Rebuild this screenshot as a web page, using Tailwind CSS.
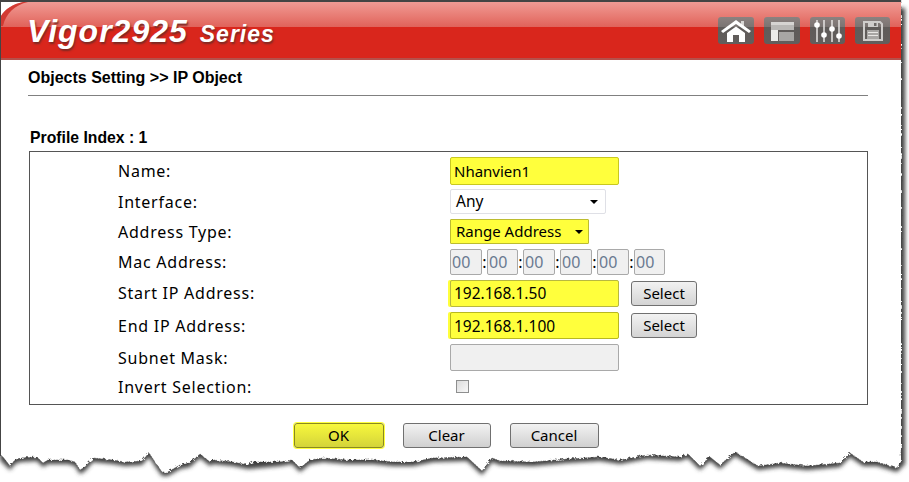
<!DOCTYPE html>
<html lang="en">
<head>
  <meta charset="UTF-8" />
  <title>IP Object</title>
  <script src="https://cdn.jsdelivr.net/npm/@tailwindcss/browser@4"></script>
</head>
<body class="bg-white">
  <div class="relative w-[909px] h-[482px] overflow-hidden bg-white font-['Noto_Sans',sans-serif] text-[16px] text-black">
    <!-- torn paper edge and drop shadow -->
    <svg class="absolute inset-0" width="909" height="482" viewBox="0 0 909 482">
      <defs>
        <filter id="blur" x="-5%" y="-5%" width="110%" height="110%"><feGaussianBlur stdDeviation="2" /></filter>
        <filter id="rough" x="-2%" y="-2%" width="104%" height="104%"><feTurbulence type="fractalNoise" baseFrequency="0.35" numOctaves="2" seed="4" /><feDisplacementMap in="SourceGraphic" scale="4" /></filter>
      </defs>
      <path filter="url(#blur)" fill="#404040" d="M6 8H905V464L897 472L877 466L863 466L850 457L840 467L807 470L780 467L758 470L745 462L735 456L720 469L710 461L700 470L688 458L680 461L647 459L620 464L600 461L567 463L533 466L500 465L492 462L482 475L467 461L433 462L413 466L393 466L373 464L347 464L323 462L310 464L300 472L292 464L280 466L248 469L233 466L213 464L210 466L200 458L190 467L180 469L168 476L162 476L157 469L149 457L142 465L125 466L113 464L93 462L85 471L80 474L75 466L68 464L48 464L43 467L37 461L20 462L15 464L10 470L0 460Z" />
      <path filter="url(#rough)" fill="#fff" stroke="#444" stroke-width="0.6" stroke-dasharray="1.500 1" d="M0 0H901V462L897 468L877 462L863 462L850 453L840 463L807 466L780 463L758 466L745 458L735 452L720 465L710 457L700 466L688 454L680 457L647 455L620 460L600 457L567 459L533 462L500 461L492 458L482 471L467 457L433 458L413 462L393 462L373 460L347 460L323 458L310 460L300 468L292 460L280 462L253 462L248 465L233 462L213 460L210 462L200 454L190 463L180 465L168 472L162 472L157 465L149 453L142 461L125 462L113 460L93 458L85 467L80 470L75 462L68 460L48 460L43 463L37 457L20 458L15 460L10 466L3 457L0 455Z" />
      <rect x="0" y="0" width="901" height="450" fill="#fff" />
    </svg>

    <div class="absolute top-0 left-0 w-[1px] h-[456px] bg-[#444]"></div>

    <div class="relative w-[901px] pl-[1px]">
      <header class="relative h-[60px] border-t-2 border-[#444] bg-[#d9261c] overflow-hidden flex items-center justify-between">
        <div class="absolute inset-x-0 top-0 h-[25px] bg-gradient-to-b from-[#f09a94] to-[#e0625a]"></div>
        <div class="absolute inset-x-0 bottom-0 h-[2px] bg-[#b5504a]"></div>
        <svg class="absolute top-0 left-0" width="30" height="24" viewBox="0 0 30 24"><path d="M0 0H22C12 2 4 7 0 14Z" fill="#fff" /><path d="M0 14C4 7 12 2 22 0H27C14 3 5 11 2 24H0Z" fill="#d23a32" /></svg>
        <div class="relative ml-[26px] flex items-baseline italic font-bold text-white font-['Liberation_Sans',sans-serif] [text-shadow:1px_2px_2px_#7a2a24]">
          <span class="text-[32px] tracking-[1px]">Vigor2925</span>
          <span class="ml-[12px] text-[23px] tracking-[1px]">Series</span>
        </div>
        <div class="relative mr-[11px] mt-[-1px] flex gap-[10px]">
          <div class="h-[27px] w-[36px] rounded-[3px] bg-[linear-gradient(#8b8280_0,#7b7472_36%,#5f5b59_36%,#625e5c_100%)]">
            <svg width="36" height="27" viewBox="0 0 36 27"><path d="M23 4H26V10L23 8Z" fill="#d8d6d4" /><path d="M3 14L18 3L33 14L31 16L18 7L5 16Z" fill="#fff" /><path d="M9 16L18 9.500L27 16V25H21V18H15V25H9Z" fill="#fff" /></svg>
          </div>
          <div class="h-[27px] w-[36px] rounded-[3px] bg-[linear-gradient(#8b8280_0,#7b7472_36%,#5f5b59_36%,#625e5c_100%)]">
            <svg width="36" height="27" viewBox="0 0 36 27"><path d="M7 5H30V13H7Z" fill="#b9b7b5" /><path d="M7 5H30V8H7Z" fill="#d6d4d2" /><path d="M7 13H14V24H7Z" fill="#ecebe9" /><path d="M15 15H30V24H15Z" fill="#a8a6a4" /></svg>
          </div>
          <div class="h-[27px] w-[35px] rounded-[3px] bg-[linear-gradient(#8b8280_0,#7b7472_36%,#5f5b59_36%,#625e5c_100%)]">
            <svg width="35" height="27" viewBox="0 0 35 27"><path d="M7 3V25M14 3V25M22 3V25M29 3V25" stroke="#e6e4e2" stroke-width="1.500" /><g fill="#fff"><circle cx="7" cy="8" r="2.800" /><circle cx="14" cy="18" r="2.800" /><circle cx="22" cy="12" r="2.800" /><circle cx="29" cy="19" r="2.800" /></g></svg>
          </div>
          <div class="h-[27px] w-[35px] rounded-[3px] bg-[linear-gradient(#8b8280_0,#7b7472_36%,#5f5b59_36%,#625e5c_100%)]">
            <svg width="35" height="27" viewBox="0 0 35 27"><path d="M9 5H25L27 7V23H9Z" fill="none" stroke="#cfcdcb" stroke-width="2" /><path d="M13 5H23V10H13Z" fill="#cfcdcb" /><path d="M19 6H21.500V9H19Z" fill="#6e6a68" /><path d="M12 13H24V22H12Z" fill="#a8a6a4" /><path d="M13 15H23V16H13ZM13 18H23V19H13Z" fill="#e8e6e4" /></svg>
          </div>
        </div>
      </header>

      <div class="pl-[27px] pr-[33px]">
        <h1 class="h-[36px] border-b border-[#808080] pt-[8px] font-['Liberation_Sans',sans-serif] text-[16px] font-bold leading-[20px]">Objects Setting &gt;&gt; IP Object</h1>
        <h2 class="mt-[32px] ml-[2px] h-[23px] font-['Liberation_Sans',sans-serif] text-[15.750px] font-bold leading-[20px]">Profile Index : 1</h2>

        <div class="ml-[1px] h-[254px] border-[1.500px] border-[#555] pl-[88px] pt-[3px]">
          <div class="flex h-[31.500px] items-center"><span class="w-[332px] tracking-[0.75px]">Name:</span><input value="Nhanvien1" class="h-[28px] w-[169px] rounded-[2px] border border-[#c8c820] bg-[#ffff3c] px-[3px] text-[15px] outline-none" /></div>
          <div class="flex h-[30px] items-center"><span class="w-[332px] tracking-[0.75px]">Interface:</span><div class="flex h-[25px] w-[156px] items-center justify-between rounded-[2px] border border-[#dfe0e6] bg-white pl-[5px] pr-[7px] text-[15.500px]"><span>Any</span><span class="h-0 w-0 border-x-[4px] border-t-[4px] border-x-transparent border-t-black"></span></div></div>
          <div class="flex h-[30px] items-center"><span class="w-[332px] tracking-[0.75px]">Address Type:</span><div class="flex h-[25px] w-[139px] items-center justify-between rounded-[1px] border border-[#bcbc30] bg-[#ffff3c] pl-[5px] pr-[5px] text-[15px]"><span>Range Address</span><span class="h-0 w-0 border-x-[4px] border-t-[4px] border-x-transparent border-t-black"></span></div></div>
          <div class="flex h-[30px] items-center"><span class="w-[332px] tracking-[0.75px]">Mac Address:</span>
            <div class="flex items-center text-[#6a7a90]">
              <span class="h-[26px] w-[32px] rounded-[2px] border border-[#a9a9a9] bg-[#f0f0f0] pl-[1px] leading-[24px]">00</span><span class="w-[5px] text-center text-black">:</span>
              <span class="h-[26px] w-[31px] rounded-[2px] border border-[#a9a9a9] bg-[#f0f0f0] pl-[1px] leading-[24px]">00</span><span class="w-[5px] text-center text-black">:</span>
              <span class="h-[26px] w-[32px] rounded-[2px] border border-[#a9a9a9] bg-[#f0f0f0] pl-[1px] leading-[24px]">00</span><span class="w-[5px] text-center text-black">:</span>
              <span class="h-[26px] w-[32px] rounded-[2px] border border-[#a9a9a9] bg-[#f0f0f0] pl-[1px] leading-[24px]">00</span><span class="w-[5px] text-center text-black">:</span>
              <span class="h-[26px] w-[32px] rounded-[2px] border border-[#a9a9a9] bg-[#f0f0f0] pl-[1px] leading-[24px]">00</span><span class="w-[5px] text-center text-black">:</span>
              <span class="h-[26px] w-[31px] rounded-[2px] border border-[#a9a9a9] bg-[#f0f0f0] pl-[1px] leading-[24px]">00</span>
            </div>
          </div>
          <div class="flex h-[33px] items-center"><span class="w-[332px] tracking-[0.75px]">Start IP Address:</span><input value="192.168.1.50" class="h-[27px] w-[169px] rounded-[2px] border border-[#b8b840] bg-[#ffff3c] px-[3px] text-[15.500px] shadow-[-2px_0_0_#ffff3c] outline-none" /><button class="ml-[12px] h-[25px] w-[66px] rounded-[3px] border border-[#707070] bg-gradient-to-b from-[#f2f2f2] to-[#d4d4d4] text-[15px]">Select</button></div>
          <div class="flex h-[32px] items-center"><span class="w-[332px] tracking-[0.75px]">End IP Address:</span><input value="192.168.1.100" class="h-[27px] w-[169px] rounded-[2px] border border-[#b8b820] bg-[#ffff3c] px-[3px] text-[15.500px] shadow-[-2px_0_0_#ffff3c] outline-none" /><button class="ml-[12px] h-[25px] w-[66px] rounded-[3px] border border-[#707070] bg-gradient-to-b from-[#f2f2f2] to-[#d4d4d4] text-[15px]">Select</button></div>
          <div class="flex h-[32px] items-center"><span class="w-[332px] tracking-[0.75px]">Subnet Mask:</span><div class="h-[27px] w-[169px] rounded-[2px] border border-[#a9a9a9] bg-[#f0f0f0]"></div></div>
          <div class="flex h-[26px] items-center"><span class="w-[338px] tracking-[0.75px]">Invert Selection:</span><span class="h-[13px] w-[13px] border border-[#8e8f8f] bg-gradient-to-br from-[#dcdcdc] to-[#f8f8f8]"></span></div>
        </div>

        <div class="mt-[18px] flex justify-center gap-[19px] pr-[4px] text-[15px]">
          <button class="h-[25px] w-[90px] rounded-[3px] border border-[#8a8a20] bg-gradient-to-b from-[#f8f83c] to-[#d4d43a] shadow-[0_0_0_1px_#ffff3c]">OK</button>
          <button class="h-[25px] w-[88px] rounded-[3px] border border-[#707070] bg-gradient-to-b from-[#f2f2f2] to-[#d0d0d0]">Clear</button>
          <button class="h-[25px] w-[89px] rounded-[3px] border border-[#707070] bg-gradient-to-b from-[#f2f2f2] to-[#d0d0d0]">Cancel</button>
        </div>
      </div>
    </div>
  </div>
</body>
</html>
